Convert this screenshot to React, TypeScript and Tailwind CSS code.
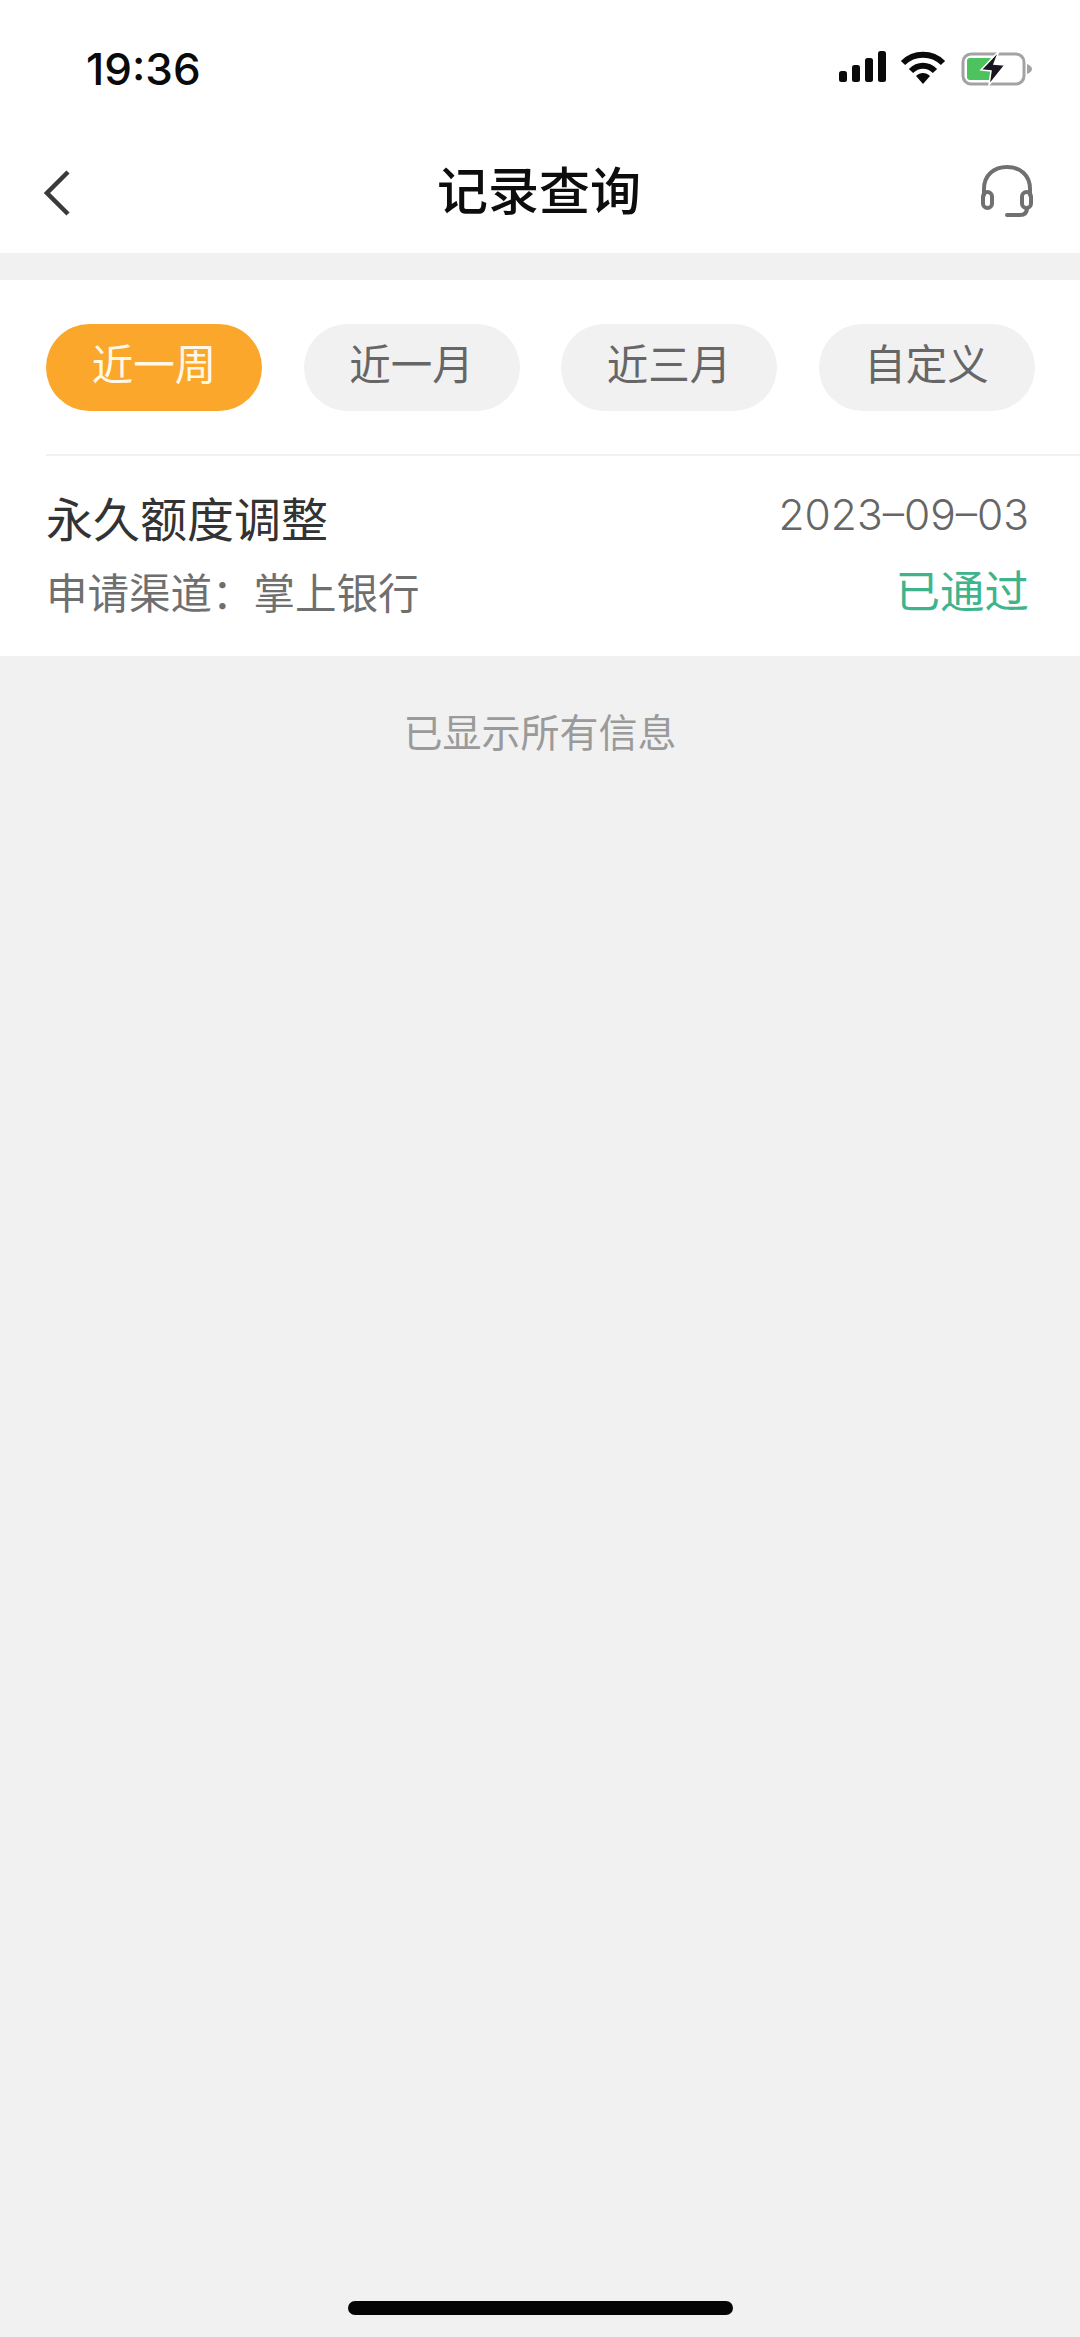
const cjk = '"Liberation Sans", "Noto Sans CJK SC", sans-serif';

const filters = ['近一周', '近一月', '近三月', '自定义'];

function SignalIcon() {
  return (
    <svg width="50" height="32" viewBox="0 0 50 32" fill="#0a0a0a">
      <rect x="1" y="20" width="8" height="11" rx="2.5" />
      <rect x="14" y="14" width="8" height="17" rx="2.5" />
      <rect x="27" y="7" width="8" height="24" rx="2.5" />
      <rect x="40" y="0" width="8" height="31" rx="2.5" />
    </svg>
  );
}

function WifiIcon() {
  return (
    <svg width="46" height="34" viewBox="0 0 46 34" fill="none" stroke="#0a0a0a" strokeWidth="6">
      <path d="M3 12 C14 1 32 1 43 12" />
      <path d="M11 20 C18 13 28 13 35 20" />
      <path d="M16 25 L23 33 L30 25 C26 21 20 21 16 25 Z" fill="#0a0a0a" stroke="none" />
    </svg>
  );
}

function BatteryIcon() {
  return (
    <svg width="72" height="36" viewBox="0 0 72 36">
      <rect x="2" y="3" width="61" height="30" rx="8" fill="none" stroke="#a3a3a3" strokeWidth="3" />
      <rect x="6" y="7" width="25" height="22" rx="3" fill="#4cc35e" />
      <path d="M38 0 L20 19 L30 20 L28 34 L44 14 L33 13 Z" fill="#1a1420" stroke="#fff" strokeWidth="1.5" />
      <path d="M66 13 C69 14 71 16 71 18 C71 20 69 22 66 23 Z" fill="#a3a3a3" />
    </svg>
  );
}

function HeadsetIcon() {
  return (
    <svg width="54" height="54" viewBox="0 0 54 54" fill="none" stroke="#707070" strokeWidth="4" strokeLinecap="round">
      <path d="M4 30 V24 C4 10 14 2 27 2 C40 2 50 10 50 24 V30" />
      <rect x="3" y="27" width="9" height="16" rx="4.5" />
      <rect x="42" y="27" width="9" height="16" rx="4.5" />
      <path d="M47 43 C47 48 44 50 40 50 H27" />
    </svg>
  );
}

export default function App() {
  return (
    <div className="flex h-[2337px] w-[1080px] flex-col overflow-hidden bg-[#f1f1f1]" style={{ fontFamily: cjk }}>
      {/* Status bar + nav */}
      <div className="bg-white">
        <div className="flex h-[136px] items-start justify-between pl-[86px] pr-[47px] pt-[44px]">
          <span className="text-[44px] font-medium leading-[50px] text-[#0a0a0a]" style={{ fontFamily: 'Inter, sans-serif' }}>19:36</span>
          <div className="mt-[7px] flex items-start gap-[12px]">
            <SignalIcon />
            <WifiIcon />
            <div className="ml-[3px]"><BatteryIcon /></div>
          </div>
        </div>
        <div className="flex h-[117px] items-start justify-between pl-[44px] pr-[46px]">
          <div className="w-[54px]">
            <svg width="26" height="46" viewBox="0 0 26 46" fill="none" stroke="#3a3a3a" strokeWidth="4.5" className="mt-[34px]">
              <path d="M24 2 L3 23 L24 44" />
            </svg>
          </div>
          <h1 className="mt-[29px] text-[51px] font-medium leading-[56px] text-[#0d0d0d]">记录查询</h1>
          <div className="mt-[29px]"><HeadsetIcon /></div>
        </div>
      </div>

      {/* Filters and record */}
      <div className="mt-[27px] h-[376px] bg-white pl-[46px]">
        <div className="flex h-[176px] items-start gap-[41.5px] border-b-2 border-[#f1f1f1] pt-[44px]">
          {filters.map((label, i) => (
            <button
              key={label}
              className={`flex h-[87px] w-[216px] items-center justify-center rounded-full pb-[4px] text-[41.5px] leading-none ${
                i === 0 ? 'bg-[#fba72c] text-[#fff8e6]' : 'bg-[#f1f1f1] text-[#666666]'
              }`}
            >
              {label}
            </button>
          ))}
        </div>
        <div className="flex justify-between pr-[51px] pt-[33px]">
          <div>
            <div className="text-[47px] leading-[64px] text-[#333333]">永久额度调整</div>
            <div className="mt-[17px] text-[41.5px] leading-[50px] text-[#6f6f6f]">申请渠道：掌上银行</div>
          </div>
          <div className="flex flex-col items-end">
            <div className="mt-[1px] text-[42.5px] leading-[50px] text-[#666666]" style={{ fontFamily: 'Inter, sans-serif', fontWeight: 300 }}>2023–09–03</div>
            <div className="mt-[28px] text-[44.5px] leading-[50px] text-[#3fb48c]">已通过</div>
          </div>
        </div>
      </div>

      <div className="mt-[53px] text-center text-[39px] leading-[50px] text-[#9a9a9a]">已显示所有信息</div>

      <div className="mt-auto flex justify-center pb-[22px]">
        <div className="h-[14px] w-[385px] rounded-full bg-[#050505]" />
      </div>
    </div>
  );
}
